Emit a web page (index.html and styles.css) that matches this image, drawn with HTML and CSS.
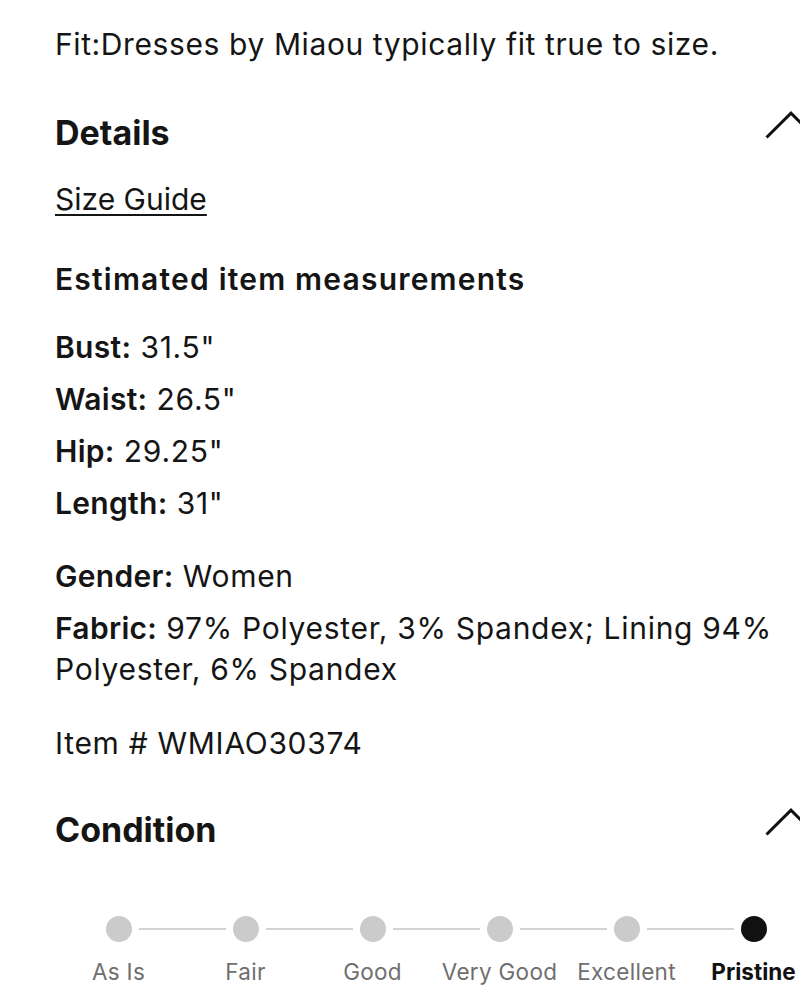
FILE: index.html
```html
<!DOCTYPE html>
<html lang="en">
<head>
<meta charset="utf-8">
<title>Product details</title>
<link rel="stylesheet" href="styles.css">
</head>
<body>
<div class="page">
  <p class="fit">Fit:Dresses by Miaou typically fit true to size.</p>

  <section class="acc">
    <div class="acc-head">
      <h2 class="acc-title">Details</h2>
      <svg class="chev" viewBox="0 0 52 28" width="52" height="28" aria-hidden="true"><polyline points="1.5,26.5 26,2.2 50.5,26.5" fill="none" stroke="#111" stroke-width="3"/></svg>
    </div>
    <a class="size-guide" href="#">Size Guide</a>
    <h3 class="sub">Estimated item measurements</h3>
    <ul class="rows measure">
      <li><b>Bust:</b> 31.5"</li>
      <li><b>Waist:</b> 26.5"</li>
      <li><b>Hip:</b> 29.25"</li>
      <li><b>Length:</b> 31"</li>
    </ul>
    <ul class="rows facts">
      <li><b>Gender:</b> Women</li>
      <li><b>Fabric:</b> 97% Polyester, 3% Spandex; Lining 94% Polyester, 6% Spandex</li>
    </ul>
    <p class="item">Item # WMIAO30374</p>
  </section>

  <section class="acc cond">
    <div class="acc-head">
      <h2 class="acc-title">Condition</h2>
      <svg class="chev" viewBox="0 0 52 28" width="52" height="28" aria-hidden="true"><polyline points="1.5,26.5 26,2.2 50.5,26.5" fill="none" stroke="#111" stroke-width="3"/></svg>
    </div>
    <div class="stepper">
      <div class="track">
        <span class="dot"></span><span class="line"></span>
        <span class="dot"></span><span class="line"></span>
        <span class="dot"></span><span class="line"></span>
        <span class="dot"></span><span class="line"></span>
        <span class="dot"></span><span class="line"></span>
        <span class="dot active"></span>
      </div>
      <div class="labels">
        <span>As Is</span>
        <span>Fair</span>
        <span>Good</span>
        <span>Very Good</span>
        <span>Excellent</span>
        <span class="active">Pristine</span>
      </div>
    </div>
  </section>
</div>
</body>
</html>
```

FILE: styles.css
```css
html, body {
  margin: 0;
  padding: 0;
  overflow: hidden;
  background: #fff;
}

body {
  font-family: Inter, "Liberation Sans", Arial, sans-serif;
  color: #151515;
}

.page {
  width: 762px;
  padding: 24px 0 0 55px;
  font-size: 30px;
  line-height: 41px;
  letter-spacing: 0.7px;
}

p, h2, h3, ul {
  margin: 0;
  padding: 0;
}

.fit {
  letter-spacing: 0.6px;
}

.acc {
  margin-top: 48px;
}

.acc-head {
  display: flex;
  justify-content: space-between;
  align-items: flex-start;
}

.acc-title {
  font-size: 34px;
  line-height: 40px;
  font-weight: 700;
  letter-spacing: 0;
}

.chev {
  display: block;
  margin-top: -2px;
  flex: none;
}

.size-guide {
  display: inline-block;
  margin-top: 26px;
  color: #151515;
  letter-spacing: 0;
  text-decoration: underline;
  text-decoration-thickness: 2px;
  text-underline-offset: 4px;
}

.sub {
  margin-top: 39px;
  font-size: 30px;
  font-weight: 600;
  letter-spacing: 1.2px;
}

.rows {
  list-style: none;
  display: flex;
  flex-direction: column;
  gap: 11px;
}

.rows b {
  font-weight: 600;
  letter-spacing: 0.3px;
}

.measure {
  margin-top: 27px;
}

.facts {
  margin-top: 32px;
}

.item {
  margin-top: 33px;
}

.cond {
  margin-top: 46px;
}

.stepper {
  margin-top: 66px;
}

.track {
  display: flex;
  align-items: center;
  padding-left: 50.5px;
}

.dot {
  width: 26px;
  height: 26px;
  border-radius: 50%;
  background: #cbcbcb;
  flex: none;
}

.dot.active {
  background: #111;
}

.line {
  width: 87px;
  height: 2px;
  margin: 0 7px;
  background: #d3d3d3;
  flex: none;
}

.labels {
  display: grid;
  grid-template-columns: repeat(6, 127px);
  margin-top: 15px;
  font-size: 22.5px;
  line-height: 30px;
  letter-spacing: 0.3px;
  color: #6f6f6f;
  text-align: center;
}

.labels .active {
  color: #111;
  font-weight: 700;
  letter-spacing: 0;
}
```
